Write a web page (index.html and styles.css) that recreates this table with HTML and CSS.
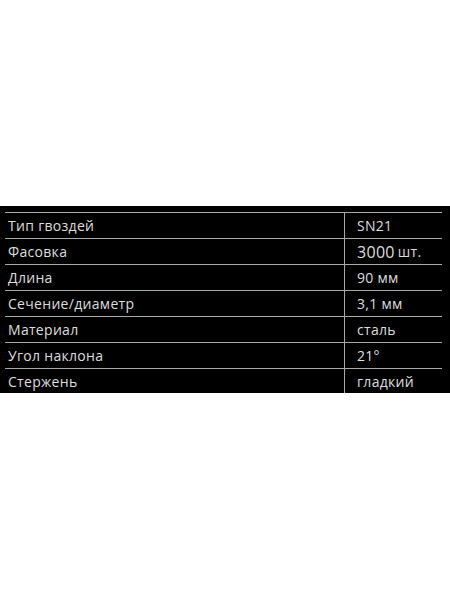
FILE: index.html
```html
<!DOCTYPE html>
<html lang="ru">
<head>
<meta charset="utf-8">
<title>Характеристики</title>
<link rel="stylesheet" href="styles.css">
</head>
<body>
<section class="band">
  <div class="specs">
    <div class="label">Тип гвоздей</div><div class="value">SN21</div>
    <div class="label">Фасовка</div><div class="value"><span class="big">3000</span>шт.</div>
    <div class="label">Длина</div><div class="value">90 мм</div>
    <div class="label">Сечение/диаметр</div><div class="value">3,1 мм</div>
    <div class="label">Материал</div><div class="value">сталь</div>
    <div class="label">Угол наклона</div><div class="value">21°</div>
    <div class="label">Стержень</div><div class="value">гладкий</div>
  </div>
</section>
</body>
</html>
```

FILE: styles.css
```css
html, body {
  margin: 0;
  padding: 0;
  background: #ffffff;
}
body {
  width: 450px;
  height: 600px;
  font-family: "Open Sans", "DejaVu Sans", sans-serif;
}
.band {
  margin-top: 206px;
  height: 187px;
  background: #000000;
  padding: 6px 0 0 5px;
  box-sizing: border-box;
  overflow: hidden;
}
.specs {
  display: grid;
  grid-template-columns: 339px 98px;
  grid-auto-rows: 26px;
  color: #dedede;
  font-size: 14px;
  letter-spacing: 0.3px;
}
.label, .value {
  border-top: 1px solid #a9a9a9;
  display: flex;
  align-items: center;
  line-height: 1;
}
.label {
  padding-left: 3px;
}
.value {
  padding-left: 12px;
  border-left: 1px solid #a9a9a9;
}
.big {
  font-size: 16px;
  margin-right: 3px;
}
```
